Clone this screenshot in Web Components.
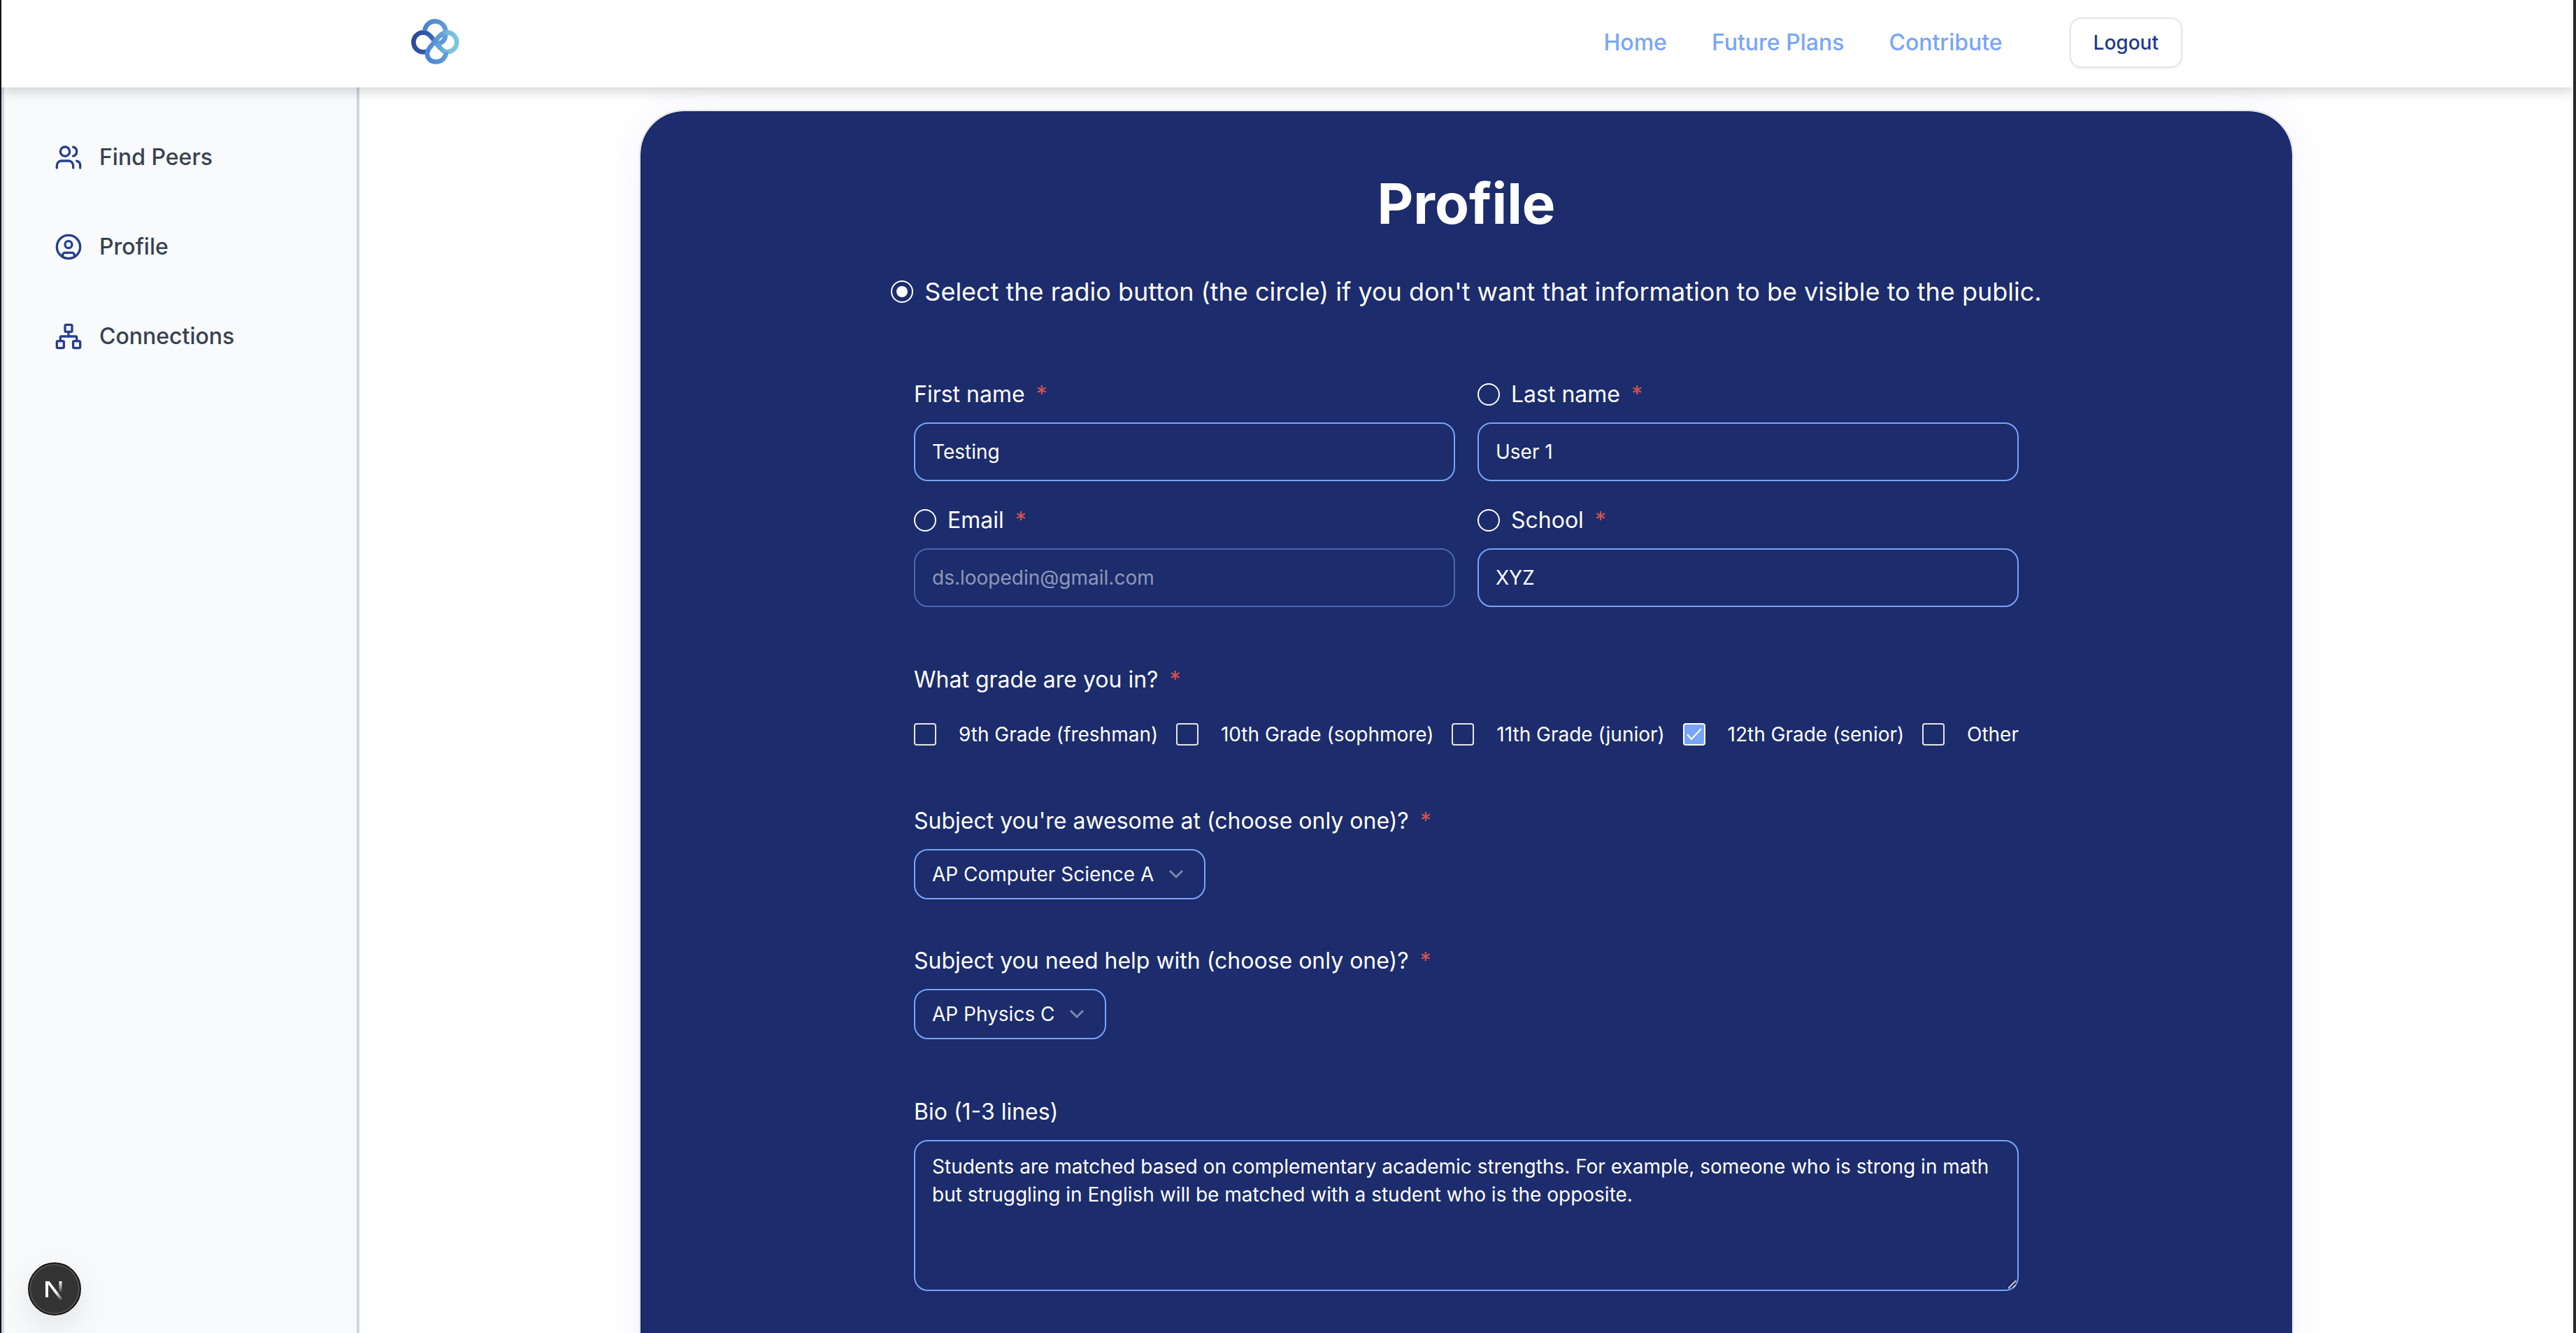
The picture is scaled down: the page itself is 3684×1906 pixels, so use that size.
<!DOCTYPE html>
<html lang="en">
<head>
<meta charset="utf-8">
<title>Profile</title>
<style>
  body { margin: 0; font-family: Inter, "Liberation Sans", sans-serif; background: #fff; }
</style>
</head>
<body>
<app-shell>
  <site-header slot="header">
    <nav-link href="#home">Home</nav-link>
    <nav-link href="#future">Future Plans</nav-link>
    <nav-link href="#contribute">Contribute</nav-link>
  </site-header>
  <side-nav slot="side">
    <side-link icon="users" href="#peers">Find Peers</side-link>
    <side-link icon="user" href="#profile">Profile</side-link>
    <side-link icon="network" href="#connections">Connections</side-link>
  </side-nav>
  <profile-card heading="Profile">
    <privacy-note slot="note">Select the radio button (the circle) if you don't want that information to be visible to the public.</privacy-note>
    <field-grid>
      <text-field label="First name" value="Testing" required></text-field>
      <text-field label="Last name" value="User 1" required private-toggle></text-field>
      <text-field label="Email" value="ds.loopedin@gmail.com" required private-toggle disabled></text-field>
      <text-field label="School" value="XYZ" required private-toggle></text-field>
    </field-grid>
    <grade-picker label="What grade are you in?">
      <check-option>9th Grade (freshman)</check-option>
      <check-option>10th Grade (sophmore)</check-option>
      <check-option>11th Grade (junior)</check-option>
      <check-option checked>12th Grade (senior)</check-option>
      <check-option>Other</check-option>
    </grade-picker>
    <subject-picks>
      <select-field label="Subject you're awesome at (choose only one)?" value="AP Computer Science A"></select-field>
      <select-field label="Subject you need help with (choose only one)?" value="AP Physics C"></select-field>
    </subject-picks>
    <bio-field label="Bio (1-3 lines)">Students are matched based on complementary academic strengths. For example, someone who is strong in math but struggling in English will be matched with a student who is the opposite.</bio-field>
  </profile-card>
  <dev-badge slot="badge"></dev-badge>
</app-shell>

<script>
const define = (name, render) => customElements.define(name, class extends HTMLElement {
  constructor() {
    super();
    this.attachShadow({ mode: 'open' });
  }
  connectedCallback() {
    this.shadowRoot.innerHTML = '<style>*{box-sizing:border-box}' + render(this);
  }
});

/* Shared control styles */
const LABEL = `
  .label { display: flex; align-items: center; gap: 16px; height: 40px; font-size: 32px; line-height: 40px; color: #fff; }
  .req { color: #d5524f; }
`;
const RADIO = `
  input[type=radio] { appearance: none; margin: 0; width: 32px; height: 32px; flex: none; border: 2px solid #fff; border-radius: 50%; display: grid; place-items: center; }
  input[type=radio]:checked::before { content: ""; width: 16px; height: 16px; border-radius: 50%; background: #fff; }
`;
const BOX = `border: 2px solid #78a5f7; border-radius: 20px; background: transparent; color: #fff; font-family: inherit; font-size: 28px; outline: 0; margin: 0;`;

define('app-shell', () => `
  :host { display: flex; flex-direction: column; height: 100vh; overflow: hidden; border-left: 2px solid #111; border-right: 4px solid #2b2b2b; box-sizing: border-box; }
  .body { display: flex; flex: 1; min-height: 0; }
  main { flex: 1; min-width: 0; overflow: hidden; padding: 32px 32px 0; display: flex; flex-direction: column; align-items: center; }
</style>
<slot name="header"></slot>
<div class="body"><slot name="side"></slot><main><slot></slot></main></div>
<slot name="badge"></slot>`);

define('site-header', () => `
  :host { display: block; background: #fff; box-shadow: 0 4px 18px rgba(0,0,0,.2); position: relative; z-index: 2; }
  header { max-width: 2560px; height: 125px; padding-bottom: 4px; margin: 0 auto; display: flex; align-items: center; }
  svg { width: 120px; height: 100px; margin-right: auto; display: block; }
  nav { display: flex; gap: 64px; margin-right: 96px; }
  button { height: 72px; padding: 0 32px; border: 2px solid #e5e5e5; border-radius: 16px; background: #fff; color: #1e3a8a; font: 500 28px/40px Inter, sans-serif; box-shadow: 0 2px 4px rgba(0,0,0,.06); }
</style>
<header>
  <svg viewBox="0 0 360 300" fill="none" stroke-width="20" stroke-linecap="butt" role="img" aria-label="LoopedIn">
    <defs>
      <linearGradient id="l" gradientUnits="userSpaceOnUse" x1="80" y1="150" x2="240" y2="180"><stop offset="0" stop-color="#2a4596"/><stop offset=".4" stop-color="#3659b0"/><stop offset="1" stop-color="#5ea2d8"/></linearGradient>
      <linearGradient id="t" gradientUnits="userSpaceOnUse" x1="130" y1="100" x2="240" y2="100"><stop offset="0" stop-color="#467fd0"/><stop offset="1" stop-color="#62a0d6"/></linearGradient>
      <linearGradient id="r" gradientUnits="userSpaceOnUse" x1="190" y1="140" x2="286" y2="150"><stop offset="0" stop-color="#5c9bdc"/><stop offset=".45" stop-color="#78b9d9"/><stop offset="1" stop-color="#80c8e3"/></linearGradient>
      <linearGradient id="b" gradientUnits="userSpaceOnUse" x1="140" y1="200" x2="240" y2="170"><stop offset="0" stop-color="#4a83d4"/><stop offset="1" stop-color="#64a3da"/></linearGradient>
    </defs>
    <path stroke="url(#l)" d="M146 188A42 42 0 1 1 132 106C148 106 158 114 168 126L206 174"/>
    <path stroke="url(#t)" d="M139 100A45 45 0 0 1 229 107C229 135 220 150 197 153L184 142"/>
    <path stroke="url(#r)" d="M184 142L206 172C216 184 222 190 235 190A42 42 0 1 0 234 106C221 106 212 113 204 122"/>
    <path stroke="url(#b)" d="M218 110C208 115 203 120 196 129L160 172C140 200 152 232 190 232A42 42 0 0 0 231 190"/>
  </svg>
  <nav><slot></slot></nav>
  <button type="button">Logout</button>
</header>`);

define('nav-link', el => `
  :host { display: block; }
  a { color: #78a6f7; text-decoration: none; font-size: 32px; line-height: 48px; font-weight: 500; white-space: nowrap; }
</style>
<a href="${el.getAttribute('href')}"><slot></slot></a>`);

define('side-nav', () => `
  :host { display: block; width: 512px; flex: none; background: #f9fafc; border: solid #cfd6e3; border-width: 0 4px; box-sizing: border-box; }
  nav { display: flex; flex-direction: column; gap: 32px; padding: 52px 40px; }
</style>
<nav><slot></slot></nav>`);

const ICONS = {
  users: '<path d="M16 21v-2a4 4 0 0 0-4-4H6a4 4 0 0 0-4 4v2"/><circle cx="9" cy="7" r="4"/><path d="M22 21v-2a4 4 0 0 0-3-3.87"/><path d="M16 3.13a4 4 0 0 1 0 7.75"/>',
  user: '<circle cx="12" cy="12" r="10"/><circle cx="12" cy="10" r="3"/><path d="M7 20.662V19a2 2 0 0 1 2-2h6a2 2 0 0 1 2 2v1.662"/>',
  network: '<rect x="16" y="16" width="6" height="6" rx="1"/><rect x="2" y="16" width="6" height="6" rx="1"/><rect x="9" y="2" width="6" height="6" rx="1"/><path d="M5 16v-3a1 1 0 0 1 1-1h12a1 1 0 0 1 1 1v3"/><path d="M12 12V8"/>'
};
define('side-link', el => `
  :host { display: block; }
  a { display: flex; align-items: center; gap: 24px; height: 96px; padding: 0 32px; color: #374151; text-decoration: none; font-size: 32px; line-height: 48px; font-weight: 500; }
  svg { width: 40px; height: 40px; flex: none; }
</style>
<a href="${el.getAttribute('href')}"><svg viewBox="0 0 24 24" fill="none" stroke="#263f8d" stroke-width="2" stroke-linecap="round" stroke-linejoin="round" aria-hidden="true">${ICONS[el.getAttribute('icon')]}</svg><slot></slot></a>`);

define('profile-card', el => `
  :host { display: flex; flex-direction: column; align-items: center; flex: none; width: 100%; max-width: 2366px; padding: 92px 32px 160px; background: #1c2c6c; background-clip: padding-box; border: 2px solid #e5e5e5; border-radius: 64px; box-shadow: 0 0 60px rgba(60,60,200,.06); box-sizing: border-box; color: #fff; }
  h1 { margin: 0 0 58px; font-size: 80px; line-height: 80px; font-weight: 700; }
  form { width: 100%; max-width: 1580px; margin-top: 99px; display: flex; flex-direction: column; gap: 84px; }
</style>
<h1>${el.getAttribute('heading')}</h1>
<slot name="note"></slot>
<form><slot></slot></form>`);

define('privacy-note', () => `
  :host { display: block; }
  ${RADIO}
  label { display: flex; align-items: center; gap: 16px; font-size: 36px; line-height: 56px; color: #fff; }
</style>
<label><input type="radio" checked><span><slot></slot></span></label>`);

define('field-grid', () => `
  :host { display: grid; grid-template-columns: 1fr 1fr; gap: 36px 32px; }
</style><slot></slot>`);

define('text-field', el => {
  const label = el.getAttribute('label');
  return `
  :host { display: flex; flex-direction: column; gap: 20px; }
  ${LABEL}${RADIO}
  input[type=text] { ${BOX} width: 100%; height: 84px; padding: 0 24px; }
  input[type=text]:disabled { opacity: .5; }
</style>
<div class="label">
  ${el.hasAttribute('private-toggle') ? `<input type="radio" aria-label="Hide ${label}">` : ''}
  <label for="f">${label}</label><span class="req">*</span>
</div>
<input type="text" id="f" value="${el.getAttribute('value')}"${el.hasAttribute('disabled') ? ' disabled' : ''}>`;
});

define('grade-picker', el => `
  :host { display: block; }
  ${LABEL}
  .row { display: flex; justify-content: space-between; margin-top: 38px; }
</style>
<div role="group" aria-labelledby="g">
  <div class="label"><span id="g">${el.getAttribute('label')}</span><span class="req">*</span></div>
  <div class="row"><slot></slot></div>
</div>`);

define('check-option', el => `
  :host { display: block; }
  label { display: flex; align-items: center; gap: 32px; font-size: 28px; line-height: 40px; white-space: nowrap; color: #fff; }
  .box { display: grid; place-items: center; }
  .box > * { grid-area: 1 / 1; }
  input { appearance: none; margin: 0; width: 32px; height: 32px; border: 2px solid #e5e5e5; border-radius: 4px; }
  input:checked { background: #78a6f7; border-color: #fff; }
  svg { width: 28px; height: 28px; visibility: hidden; pointer-events: none; }
  input:checked + svg { visibility: visible; }
</style>
<label><span class="box"><input type="checkbox"${el.hasAttribute('checked') ? ' checked' : ''}><svg viewBox="0 0 28 28" fill="none" stroke="#fff" stroke-width="2" aria-hidden="true"><path d="M4 14l6 7L24 6"/></svg></span><span><slot></slot></span></label>`);

define('subject-picks', () => `
  :host { display: flex; flex-direction: column; gap: 68px; }
</style><slot></slot>`);

define('select-field', el => `
  :host { display: flex; flex-direction: column; gap: 20px; align-items: flex-start; }
  ${LABEL}
  .wrap { display: grid; align-items: center; justify-items: end; }
  .wrap > * { grid-area: 1 / 1; }
  select { ${BOX} appearance: none; height: 72px; padding: 0 71px 0 24px; }
  svg { width: 32px; height: 32px; margin-right: 26px; pointer-events: none; }
</style>
<div class="label"><label for="s">${el.getAttribute('label')}</label><span class="req">*</span></div>
<div class="wrap">
  <select id="s"><option>${el.getAttribute('value')}</option></select>
  <svg viewBox="0 0 32 32" fill="none" stroke="#7d88ae" stroke-width="3" aria-hidden="true"><path d="M7 11l9 9 9-9"/></svg>
</div>`);

define('bio-field', el => `
  :host { display: flex; flex-direction: column; gap: 20px; }
  ${LABEL}
  .wrap { display: grid; }
  .wrap > * { grid-area: 1 / 1; }
  textarea { ${BOX} display: block; width: 100%; height: 216px; padding: 16px 24px; line-height: 40px; resize: vertical; }
  textarea::-webkit-resizer { display: none; }
  svg { width: 18px; height: 18px; margin: 2px; place-self: end; pointer-events: none; }
</style>
<div class="label"><label for="b">${el.getAttribute('label')}</label></div>
<div class="wrap">
  <textarea id="b">${el.textContent.trim()}</textarea>
  <svg viewBox="0 0 18 18" fill="none" stroke-width="2" aria-hidden="true">
    <path stroke="#10183f" d="M3 16L15 4M10 16l6-6"/>
    <path stroke="#c9ccd8" d="M5 16L16 5M11 16l5-5"/>
  </svg>
</div>`);

define('dev-badge', () => `
  :host { position: fixed; left: 40px; bottom: 25px; width: 76px; height: 76px; border-radius: 50%; z-index: 3; box-shadow: 0 16px 48px rgba(0,0,0,.1); }
  button { width: 76px; height: 76px; padding: 0; border: 2px solid #171717; border-radius: 50%; background: #333; box-shadow: inset 0 0 0 2px #515151; display: block; }
  svg { width: 72px; height: 72px; display: block; }
</style>
<button type="button" aria-label="Open developer tools">
  <svg viewBox="0 0 72 72" fill="none" stroke-width="4" aria-hidden="true">
    <defs>
      <linearGradient id="d" gradientUnits="userSpaceOnUse" x1="38" y1="41" x2="47" y2="53"><stop stop-color="#fff"/><stop offset="1" stop-color="#fff" stop-opacity="0"/></linearGradient>
      <linearGradient id="v" gradientUnits="userSpaceOnUse" x1="44" y1="25" x2="44" y2="42"><stop stop-color="#fff"/><stop offset="1" stop-color="#fff" stop-opacity="0"/></linearGradient>
    </defs>
    <path stroke="#fff" d="M25 25v23"/>
    <path stroke="url(#v)" d="M44.500 25v17"/>
    <path fill="url(#d)" d="M23 25h5.500L47.500 50l-3 2.500L26 28z"/>
  </svg>
</button>`);
</script>
</body>
</html>
